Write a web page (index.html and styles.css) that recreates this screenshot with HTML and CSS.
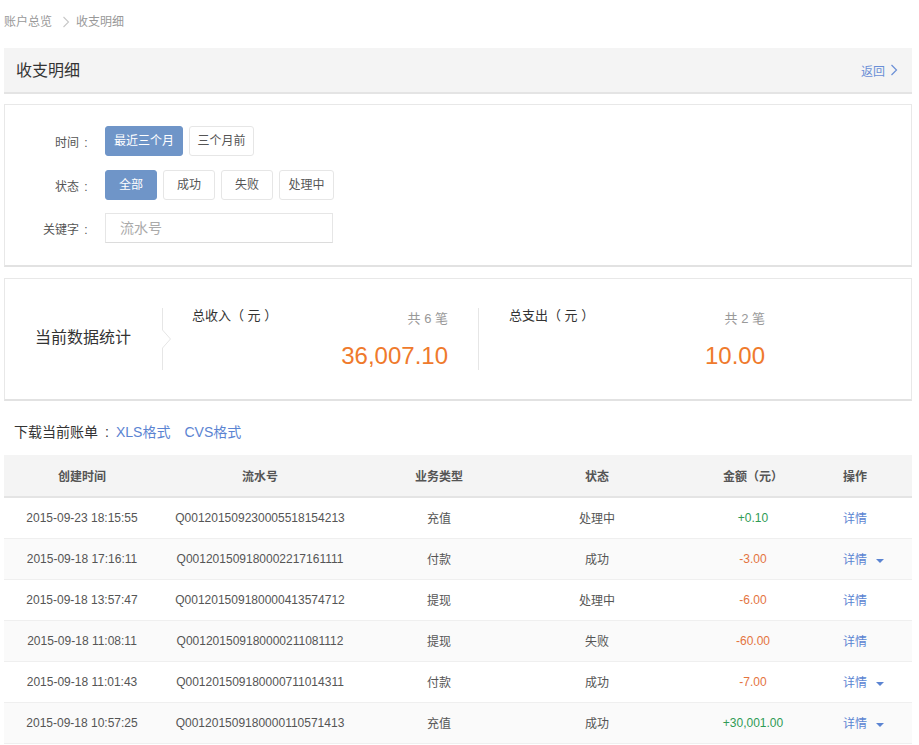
FILE: index.html
```html
<!DOCTYPE html>
<html lang="zh-CN">
<head>
<meta charset="utf-8">
<title>收支明细</title>
<link rel="stylesheet" href="styles.css">
</head>
<body>
<div class="page">
  <div class="crumbs">
    <span>账户总览</span>
    <svg class="crumb-arrow" width="8" height="12" viewBox="0 0 8 12"><path d="M1.5 1 L6.5 6 L1.5 11" fill="none" stroke="#c8c8c8" stroke-width="1.1"/></svg>
    <span>收支明细</span>
  </div>

  <div class="head">
    <h1 class="head-title">收支明细</h1>
    <a class="back">返回
      <svg width="8" height="12" viewBox="0 0 8 12"><path d="M1.5 1 L6.5 6 L1.5 11" fill="none" stroke="#6a8fd6" stroke-width="1.2"/></svg>
    </a>
  </div>

  <div class="panel filter">
    <div class="frow">
      <span class="flabel">时间<span class="colon">:</span></span>
      <span class="btn on">最近三个月</span>
      <span class="btn w65">三个月前</span>
    </div>
    <div class="frow">
      <span class="flabel">状态<span class="colon">:</span></span>
      <span class="btn on w52">全部</span>
      <span class="btn w52">成功</span>
      <span class="btn w52">失败</span>
      <span class="btn w55">处理中</span>
    </div>
    <div class="frow">
      <span class="flabel">关键字<span class="colon">:</span></span>
      <div class="input">流水号</div>
    </div>
  </div>

  <div class="panel stats">
    <div class="stats-label">当前数据统计</div>
    <svg class="chev" width="12" height="62" viewBox="0 0 12 62"><path d="M1.5 0 V22 L9.5 31 L1.5 40 V62" fill="none" stroke="#e6e6e6" stroke-width="1"/></svg>
    <div class="stat">
      <div class="stat-top"><span class="stat-name">总收入（ 元 ）</span><span class="stat-count">共 6 笔</span></div>
      <div class="stat-num">36,007.10</div>
    </div>
    <div class="vline"></div>
    <div class="stat stat2">
      <div class="stat-top"><span class="stat-name">总支出（ 元 ）</span><span class="stat-count">共 2 笔</span></div>
      <div class="stat-num">10.00</div>
    </div>
  </div>

  <div class="download">下载当前账单<span class="colon">:</span><a class="dl">XLS格式</a><a class="dl">CVS格式</a></div>

  <table class="tbl">
    <colgroup>
      <col class="c1"><col class="c2"><col class="c3"><col class="c4"><col class="c5"><col class="c6">
    </colgroup>
    <thead>
      <tr><th>创建时间</th><th>流水号</th><th>业务类型</th><th>状态</th><th>金额（元）</th><th class="op">操作</th></tr>
    </thead>
    <tbody>
      <tr><td>2015-09-23 18:15:55</td><td>Q001201509230005518154213</td><td>充值</td><td>处理中</td><td class="plus">+0.10</td><td class="op"><a class="link">详情</a></td></tr>
      <tr class="alt"><td>2015-09-18 17:16:11</td><td>Q001201509180002217161111</td><td>付款</td><td>成功</td><td class="minus">-3.00</td><td class="op"><a class="link">详情</a><span class="caret"></span></td></tr>
      <tr><td>2015-09-18 13:57:47</td><td>Q001201509180000413574712</td><td>提现</td><td>处理中</td><td class="minus">-6.00</td><td class="op"><a class="link">详情</a></td></tr>
      <tr class="alt"><td>2015-09-18 11:08:11</td><td>Q001201509180000211081112</td><td>提现</td><td>失败</td><td class="minus">-60.00</td><td class="op"><a class="link">详情</a></td></tr>
      <tr><td>2015-09-18 11:01:43</td><td>Q001201509180000711014311</td><td>付款</td><td>成功</td><td class="minus">-7.00</td><td class="op"><a class="link">详情</a><span class="caret"></span></td></tr>
      <tr class="alt"><td>2015-09-18 10:57:25</td><td>Q001201509180000110571413</td><td>充值</td><td>成功</td><td class="plus">+30,001.00</td><td class="op"><a class="link">详情</a><span class="caret"></span></td></tr>
    </tbody>
  </table>
</div>
</body>
</html>
```

FILE: styles.css
```css
* { box-sizing: border-box; }
html, body { margin: 0; padding: 0; background: #fff; }
body {
  font-family: "Liberation Sans", Arial, "Noto Sans CJK SC", sans-serif;
  font-size: 12px;
  color: #555;
}
.page { width: 908px; margin-left: 4px; }

.crumbs {
  height: 48px;
  padding-top: 14px;
  line-height: 16px;
  color: #999;
  font-size: 12px;
  display: flex;
  align-items: flex-start;
}
.crumb-arrow { margin: 2px 6px 0 10px; }

.head {
  height: 46px;
  background: #f4f4f4;
  border-bottom: 2px solid #e4e4e4;
  display: flex;
  align-items: center;
  justify-content: space-between;
  padding: 0 14px 0 12px;
}
.head-title { margin: 0; font-size: 16px; font-weight: normal; color: #333; line-height: 20px; margin-top: 1px; }
.back { color: #6a8fd6; font-size: 12px; display: flex; align-items: center; gap: 5px; }

.panel {
  border: 1px solid #e8e8e8;
  border-bottom: 2px solid #e2e2e2;
  background: #fff;
}
.filter {
  margin-top: 10px;
  padding: 21px 0 22px 0;
  display: flex;
  flex-direction: column;
  gap: 14px;
}
.frow { display: flex; align-items: center; gap: 6px; height: 30px; }
.frow:last-child { margin-top: -1px; }
.flabel { width: 94px; text-align: right; padding-right: 6px; color: #555; font-size: 12px; }
.colon { display: inline-block; width: 14px; text-align: center; }
.btn {
  height: 30px;
  line-height: 28px;
  padding: 0 6px;
  border: 1px solid #e6e6e6;
  border-radius: 3px;
  background: #fff;
  color: #555;
  text-align: center;
  font-size: 12px;
}
.btn.on { background: #6f95c8; border-color: #6f95c8; color: #fff; width: 78px; }
.btn.w65 { width: 65px; }
.btn.w52 { width: 52px; }
.btn.w55 { width: 55px; }
.input {
  width: 228px;
  height: 30px;
  border: 1px solid #e6e6e6;
  border-bottom-color: #dcdcdc;
  padding-left: 14px;
  line-height: 28px;
  color: #aaa;
  font-size: 14px;
}

.stats {
  margin-top: 11px;
  height: 123px;
  display: flex;
  align-items: center;
}
.stats-label { width: 156px; padding-left: 30px; font-size: 16px; line-height: 20px; color: #333; margin-top: -3px; }
.chev { display: block; }
.stat {
  width: 305px;
  height: 62px;
  padding: 0 30px 0 19px;
  display: flex;
  flex-direction: column;
}
.stat2 { width: 316px; padding-left: 30px; }
.stat-top { display: flex; justify-content: space-between; align-items: flex-start; height: 24px; }
.stat-name { font-size: 13px; color: #333; line-height: 16px; }
.stat-count { font-size: 13px; color: #999; line-height: 16px; margin-top: 3px; }
.stat-num {
  text-align: right;
  font-size: 24px;
  color: #ef7a2c;
  line-height: 28px;
  margin-top: 13px;
}
.vline { width: 1px; height: 62px; background: #e6e6e6; }

.download {
  height: 54px;
  padding: 22px 0 0 10px;
  line-height: 18px;
  font-size: 14px;
  color: #333;
}
.download .colon { width: 18px; }
.dl { color: #5b84d2; margin-right: 14px; }

.tbl {
  width: 908px;
  border-collapse: collapse;
  table-layout: fixed;
}
.c1 { width: 156px; } .c2 { width: 200px; } .c3 { width: 158px; }
.c4 { width: 158px; } .c5 { width: 154px; } .c6 { width: 82px; }
.tbl th {
  height: 42px;
  background: #f4f4f4;
  border-bottom: 2px solid #e4e4e4;
  font-weight: bold;
  color: #555;
  font-size: 12px;
  text-align: center;
  padding: 0;
}
.tbl td {
  height: 41px;
  border-bottom: 1px solid #efefef;
  text-align: center;
  color: #555;
  font-size: 12px;
  white-space: nowrap;
  padding: 0;
}
.tbl tr.alt td { background: #fafafa; }
.tbl th.op, .tbl td.op { text-align: left; padding-left: 13px; }
.plus { color: #2f9b55 !important; }
.minus { color: #e4743f !important; }
.link { color: #5b84d2; }
.caret {
  display: inline-block;
  width: 0; height: 0;
  border-left: 4px solid transparent;
  border-right: 4px solid transparent;
  border-top: 4px solid #5b84d2;
  margin-left: 9px;
  vertical-align: middle;
}
```
